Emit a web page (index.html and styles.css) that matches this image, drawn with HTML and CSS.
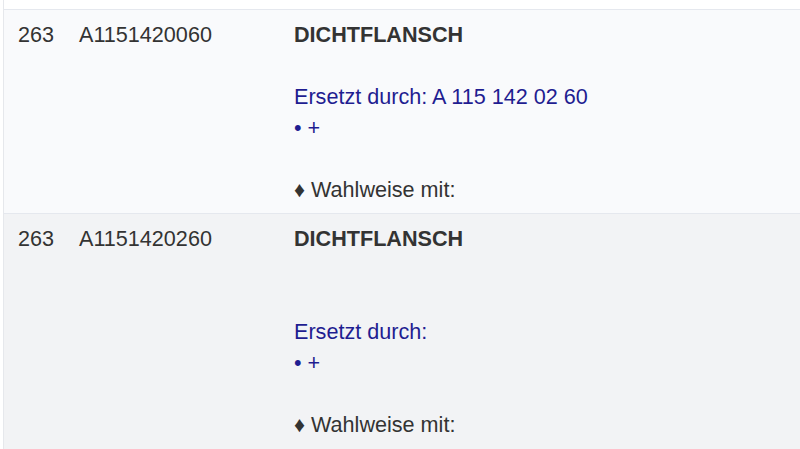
FILE: index.html
```html
<!DOCTYPE html>
<html lang="de">
<head>
<meta charset="utf-8">
<title>Teile</title>
<link rel="stylesheet" href="styles.css">
</head>
<body>
<div class="list">
  <div class="row row-a">
    <div class="pos">263</div>
    <div class="num">A1151420060</div>
    <div class="desc">
      <div class="name">DICHTFLANSCH</div>
      <div class="blank"></div>
      <div class="repl">Ersetzt durch: A 115 142 02 60</div>
      <div class="repl">• +</div>
      <div class="blank"></div>
      <div class="opt">♦ Wahlweise mit:</div>
    </div>
  </div>
  <div class="row row-b">
    <div class="pos">263</div>
    <div class="num">A1151420260</div>
    <div class="desc">
      <div class="name">DICHTFLANSCH</div>
      <div class="blank"></div>
      <div class="blank"></div>
      <div class="repl">Ersetzt durch:</div>
      <div class="repl">• +</div>
      <div class="blank"></div>
      <div class="opt">♦ Wahlweise mit:</div>
    </div>
  </div>
</div>
</body>
</html>
```

FILE: styles.css
```css
html, body {
  margin: 0;
  padding: 0;
  background: #ffffff;
}
body {
  font-family: "Liberation Sans", Arial, sans-serif;
  font-size: 21.6px;
  line-height: 31px;
  color: #333333;
}
.list {
  margin-left: 3px;
  padding-top: 9px;
  border-left: 1px solid #e6e8ec;
}
.row {
  display: grid;
  grid-template-columns: 61px 215px 1fr;
  padding: 9px 0 8px 14px;
  border-top: 1px solid #e5e8ee;
}
.row-a {
  background: #f9fafc;
}
.row-b {
  background: #f2f3f5;
  min-height: 260px;
}
.desc .name {
  font-weight: bold;
}
.blank {
  height: 31px;
}
.repl {
  color: #1f1d91;
}
.opt {
  color: #333333;
}
```
